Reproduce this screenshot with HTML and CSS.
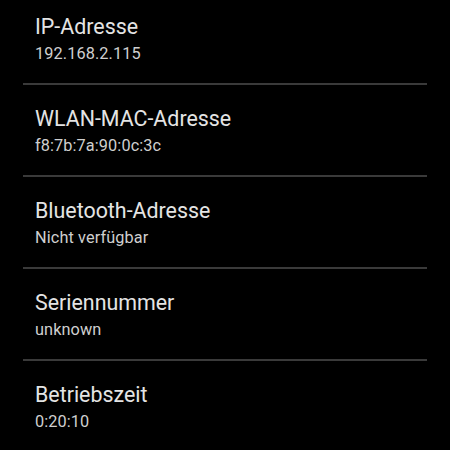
FILE: index.html
```html
<!DOCTYPE html>
<html lang="de">
<head>
    <meta charset="UTF-8">
    <title>Status</title>
    <link rel="stylesheet" href="styles.css">
</head>
<body>
    <ul class="pref-list">
        <li class="pref">
            <div class="pref-title">IP-Adresse</div>
            <div class="pref-summary">192.168.2.115</div>
        </li>
        <li class="pref">
            <div class="pref-title">WLAN-MAC-Adresse</div>
            <div class="pref-summary">f8:7b:7a:90:0c:3c</div>
        </li>
        <li class="pref">
            <div class="pref-title">Bluetooth-Adresse</div>
            <div class="pref-summary">Nicht verfügbar</div>
        </li>
        <li class="pref">
            <div class="pref-title">Seriennummer</div>
            <div class="pref-summary">unknown</div>
        </li>
        <li class="pref">
            <div class="pref-title">Betriebszeit</div>
            <div class="pref-summary">0:20:10</div>
        </li>
    </ul>
</body>
</html>
```

FILE: styles.css
```css
/* Holo dark preference list */
body {
    margin: 0;
    background: #000;
    font-family: Roboto, 'Noto Sans', sans-serif;
    height: 450px;
    overflow: hidden;
}
.pref-list {
    list-style: none;
    margin: -9px 23px 0;
    padding: 0;
}
.pref {
    height: 88px;
    padding: 2px 12px 0;
    border-top: 2px solid #3a3a3a;
    display: flex;
    flex-direction: column;
    justify-content: center;
}
.pref:first-child {
    border-top-color: transparent;
}
.pref-title {
    color: #e4e4e4;
    font-size: 21.4px;
    line-height: 26px;
}
.pref-summary {
    color: #cfcfcf;
    font-size: 16.3px;
    line-height: 22px;
    margin-top: 3px;
    letter-spacing: 0.1px;
}
```
